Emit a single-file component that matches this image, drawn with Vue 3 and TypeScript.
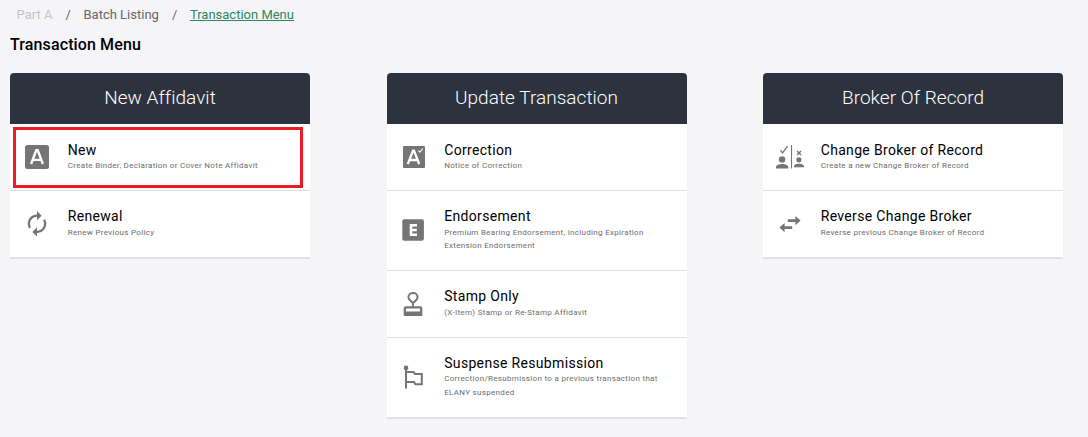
<script setup lang="ts">
type IconName = 'new' | 'renew' | 'correction' | 'endorsement' | 'stamp' | 'flag' | 'change' | 'reverse'

interface MenuItem {
  icon: IconName
  title: string
  lines: string[]
  highlighted?: boolean
}

interface MenuGroup {
  heading: string
  items: MenuItem[]
}

const groups: MenuGroup[] = [
  {
    heading: 'New Affidavit',
    items: [
      { icon: 'new', title: 'New', lines: ['Create Binder, Declaration or Cover Note Affidavit'], highlighted: true },
      { icon: 'renew', title: 'Renewal', lines: ['Renew Previous Policy'] },
    ],
  },
  {
    heading: 'Update Transaction',
    items: [
      { icon: 'correction', title: 'Correction', lines: ['Notice of Correction'] },
      { icon: 'endorsement', title: 'Endorsement', lines: ['Premium Bearing Endorsement, including Expiration', 'Extension Endorsement'] },
      { icon: 'stamp', title: 'Stamp Only', lines: ['(X-Item) Stamp or Re-Stamp Affidavit'] },
      { icon: 'flag', title: 'Suspense Resubmission', lines: ['Correction/Resubmission to a previous transaction that', 'ELANY suspended'] },
    ],
  },
  {
    heading: 'Broker Of Record',
    items: [
      { icon: 'change', title: 'Change Broker of Record', lines: ['Create a new Change Broker of Record'] },
      { icon: 'reverse', title: 'Reverse Change Broker', lines: ['Reverse previous Change Broker of Record'] },
    ],
  },
]
</script>

<template>
  <main class="page">
    <nav class="crumbs">
      <span class="crumb muted">Part A</span>
      <span class="slash">/</span>
      <span class="crumb batch">Batch Listing</span>
      <span class="slash">/</span>
      <a class="crumb current">Transaction Menu</a>
    </nav>
    <h1 class="title">Transaction Menu</h1>
    <div class="groups">
      <section v-for="group in groups" :key="group.heading" class="card">
        <h2 class="heading">{{ group.heading }}</h2>
        <ul class="list">
          <li v-for="item in group.items" :key="item.title" class="item" :class="{ tall: item.lines.length > 1 }">
            <svg class="icon" viewBox="0 0 32 32" width="32" height="32">
              <template v-if="item.icon === 'new'">
                <rect x="4" y="4" width="24" height="24" rx="2.5" />
                <path class="cut" d="M10.1 23 15.3 9.2h1.4L21.9 23M12 18.9h8.1" stroke-width="2.4" />
              </template>
              <g v-else-if="item.icon === 'renew'" transform="translate(2.1 1.9) scale(1.16)">
                <path d="M12 6v3l4-4-4-4v3c-4.42 0-8 3.58-8 8 0 1.57.46 3.03 1.24 4.26L6.7 14.8A5.87 5.87 0 0 1 6 12c0-3.31 2.69-6 6-6zm6.76 1.74L17.3 9.2c.44.84.7 1.79.7 2.8 0 3.31-2.69 6-6 6v-3l-4 4 4 4v-3c4.42 0 8-3.58 8-8 0-1.57-.46-3.03-1.24-4.26z" />
              </g>
              <template v-else-if="item.icon === 'correction'">
                <rect x="5" y="5" width="22" height="22" rx="1" />
                <path class="cut" d="M9.8 23.2 15 9.6h1L21.2 23.2M11.7 19h7.8" stroke-width="2.3" />
                <path class="cut" d="m20.3 9.6 1.6 1.6 3-3.7" stroke-width="1.1" />
              </template>
              <template v-else-if="item.icon === 'endorsement'">
                <rect x="4.3" y="5.2" width="21.6" height="21.6" rx="2" />
                <path class="cut" d="M19 11.2h-6v9.6h6M13 16h5.8" stroke-width="2.5" />
              </template>
              <template v-else-if="item.icon === 'stamp'">
                <path class="line" d="M15 15.3c-2.9-3-4.6-4.1-4.6-6.1a4.6 4.2 0 0 1 9.2 0c0 2-1.7 3.1-4.6 6.1zM15 15v4" stroke-width="2" />
                <path fill-rule="evenodd" d="M7.7 18.3h14.6a2 2 0 0 1 2 2V28H5.7v-7.7a2 2 0 0 1 2-2zM8 20.4v3h14v-3z" />
              </template>
              <template v-else-if="item.icon === 'flag'">
                <circle cx="8" cy="6.9" r="2.3" />
                <path class="line" d="M8 7v20.6M8 10.9h7.6l1.4 2.2H23.8V23.2h-6.4L16 21H8" stroke-width="2" />
              </template>
              <template v-else-if="item.icon === 'change'">
                <path class="line" d="m6.5 9.3 2.1 2.6 4.9-6.7" stroke-width="1.3" />
                <path class="line" d="M17.5 4v23.5" stroke-width="1.1" />
                <path class="line" d="m23 10 4 4m0-4-4 4" stroke-width="1.4" />
                <circle cx="8.1" cy="18.4" r="3.2" />
                <circle cx="24.9" cy="18.8" r="2.6" />
                <path d="M2 27.5v-1.3c0-2.2 3.5-3.2 6.1-3.2s6.2 1 6.2 3.2v1.3zM20 26.3v-1.1c0-1.7 2.8-2.5 4.9-2.5s5.1.8 5.1 2.5v1.1z" />
              </template>
              <template v-else>
                <path d="M13.8 11.2h7.6V8l5.2 4.6-5.2 4.6V14h-7.6zM18.2 18.2h-7.6V15l-5.2 4.6 5.2 4.6V21h7.6z" />
              </template>
            </svg>
            <div class="text">
              <div class="name">{{ item.title }}</div>
              <div v-for="line in item.lines" :key="line" class="desc">{{ line }}</div>
            </div>
            <span v-if="item.highlighted" class="marker"></span>
          </li>
        </ul>
      </section>
    </div>
  </main>
</template>

<style>
body {
  background: #f5f5f8;
}
</style>

<style scoped>
.page {
  box-sizing: border-box;
  height: 437px;
  padding: 5px 25px 0 10px;
  background: #f5f5f8;
  font-family: Roboto, "Liberation Sans", sans-serif;
  overflow: hidden;
}
.crumbs {
  display: flex;
  height: 20px;
  padding-left: 6.6px;
  font-size: 13px;
  line-height: 20px;
  color: #666;
  white-space: nowrap;
}
.slash {
  width: 5px;
  margin: 0 13px;
}
.muted {
  color: #c5c5c7;
}
.current {
  color: #2e8562;
  text-decoration: underline;
}
.title {
  height: 24px;
  margin: 8px 0 16px;
  font-size: 16px;
  font-weight: 500;
  line-height: 24px;
  letter-spacing: 0.12px;
  color: #000;
}
.groups {
  display: flex;
  justify-content: space-between;
  align-items: flex-start;
}
.card {
  width: 300px;
  background: #fff;
  border-bottom: 2px solid #dfe0e1;
  border-radius: 4px 4px 1px 1px;
}
.heading {
  height: 51px;
  margin: 0;
  border-radius: 4px 4px 0 0;
  background: #2c333f;
  color: #fff;
  font-size: 19px;
  font-weight: 300;
  line-height: 50px;
  letter-spacing: 0.04px;
  text-align: center;
}
.list {
  margin: 0;
  padding: 0;
  list-style: none;
}
.item {
  position: relative;
  display: flex;
  height: 66px;
  padding-left: 11px;
}
.item + .item {
  border-top: 1px solid #dddedf;
}
.tall {
  height: 79px;
}
.icon {
  flex: none;
  margin-top: 17px;
  fill: #757575;
}
.tall .icon {
  margin-top: 23px;
}
.cut,
.line {
  fill: none;
  stroke: #fff;
}
.line {
  stroke: #757575;
}
.text {
  padding: 15px 0 0 14.7px;
  white-space: nowrap;
}
.name {
  height: 20px;
  font-size: 14px;
  line-height: 20px;
  letter-spacing: 0.33px;
  color: #000;
}
.item:first-child .text {
  padding-top: 16px;
}
.item:first-child .name {
  height: 19px;
}
.desc {
  height: 13px;
  font-size: 8px;
  line-height: 13px;
  letter-spacing: 0.315px;
  color: #6c6c6c;
}
.item:nth-child(4) .name {
  height: 19px;
}
.item:nth-child(4) .desc {
  height: 14px;
}
.marker {
  position: absolute;
  inset: 3px 7px 2px 3px;
  border: 3px solid #ed1c24;
}
</style>
